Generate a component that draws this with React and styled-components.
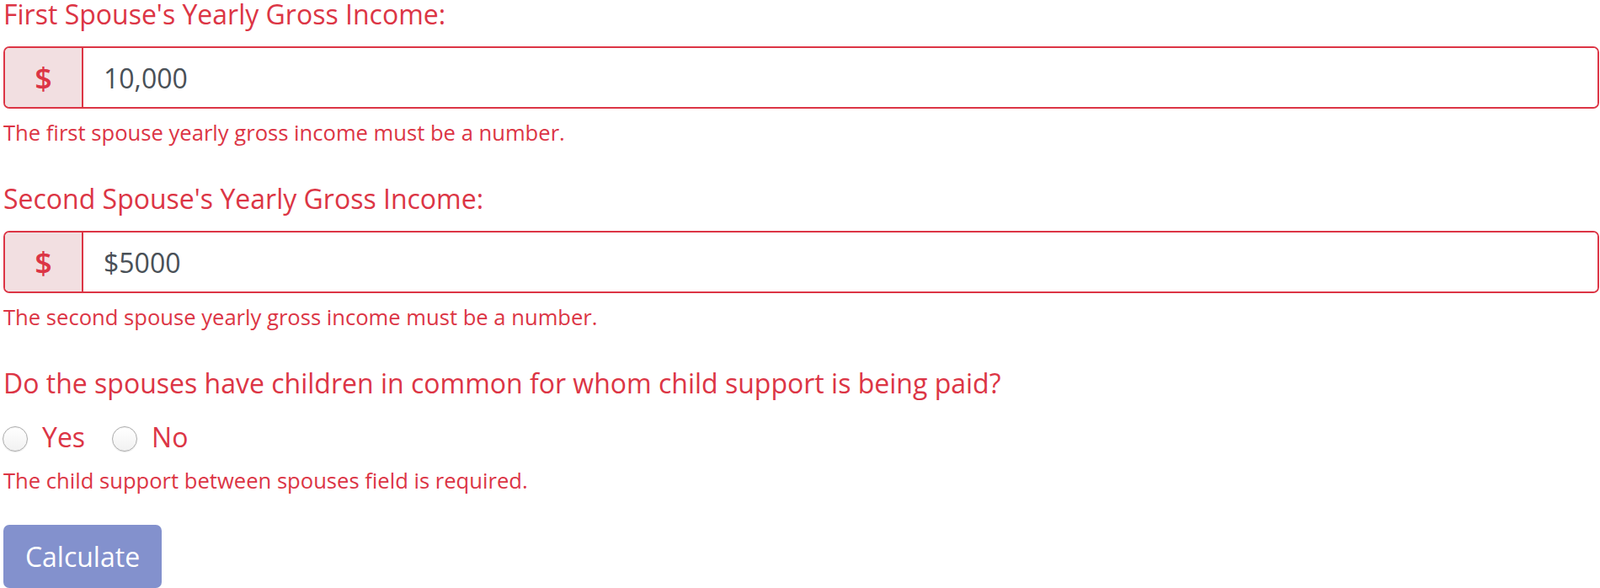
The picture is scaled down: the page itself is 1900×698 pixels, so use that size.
import React from 'react';
import styled, { createGlobalStyle } from 'styled-components';

const danger = '#dc3545';

const GlobalStyle = createGlobalStyle`
  body {
    margin: 0;
    background: #fff;
    font-family: "Open Sans", "Liberation Sans", sans-serif;
  }
`

// formular mit den einzelnen feldern
const Form = styled.form`
  padding-left: 4px;
  width: 1895px;
`

const Group = styled.div`
  margin-bottom: 42px;
`

const Label = styled.label`
  display: block;
  padding-top: 3px;
  font-size: 32px;
  line-height: 28px;
  color: ${danger};
  margin-bottom: ${props => props.gap ?? 24}px;
`

const InputGroup = styled.div`
  display: flex;
  height: 74px;
  border: 2px solid ${danger};
  border-radius: 7px;
  overflow: hidden;
  box-sizing: border-box;
`

const Addon = styled.span`
  display: flex;
  align-items: center;
  justify-content: center;
  width: 91px;
  flex-shrink: 0;
  background: #f2dfe1;
  border-right: 2px solid ${danger};
  color: ${danger};
  font-size: 36px;
  font-weight: 600;
`

const Field = styled.input`
  flex: 1;
  border: 0;
  outline: none;
  padding: 0 0 0 24px;
  font-family: inherit;
  font-size: 32px;
  color: #495057;
  background: #fff;
`

const Error = styled.div`
  margin-top: ${props => props.gap ?? 10}px;
  font-size: 25.6px;
  line-height: 38px;
  color: ${danger};
`

const RadioRow = styled.div`
  display: flex;
  align-items: center;
  gap: 33px;
  height: 48px;
  margin-top: 26px;
`

const RadioLabel = styled.label`
  display: flex;
  align-items: center;
  gap: 17px;
  font-size: 32px;
  line-height: 48px;
  color: ${danger};
`

const Radio = styled.input`
  appearance: none;
  margin: 4px 0 0 -1px;
  width: 30px;
  height: 30px;
  border-radius: 50%;
  border: 1px solid #adadad;
  background: linear-gradient(#ffffff, #f1f1f1);
  box-shadow: inset 0 1px 1px rgba(0, 0, 0, 0.06), 0 1px 1px rgba(0, 0, 0, 0.1);
  box-sizing: border-box;
`

const Button = styled.button`
  display: block;
  margin-top: 33px;
  width: 188px;
  height: 75px;
  border: 0;
  border-radius: 7px;
  background: #8391cd;
  color: #fff;
  font-family: inherit;
  font-size: 32px;
  padding: 0;
`

function MoneyField({ label, value, error }) {
  return (
    <Group>
      <Label>{label}</Label>
      <InputGroup>
        <Addon>$</Addon>
        <Field defaultValue={value} />
      </InputGroup>
      <Error>{error}</Error>
    </Group>
  );
}

export default function App() {
  return (
    <>
      <GlobalStyle />
      <Form onSubmit={e => e.preventDefault()}>
        <MoneyField
          label="First Spouse's Yearly Gross Income:"
          value="10,000"
          error="The first spouse yearly gross income must be a number."
        />
        <MoneyField
          label="Second Spouse's Yearly Gross Income:"
          value="$5000"
          error="The second spouse yearly gross income must be a number."
        />
        <div>
          <Label gap={0}>Do the spouses have children in common for whom child support is being paid?</Label>
          <RadioRow>
            <RadioLabel><Radio type="radio" name="children" />Yes</RadioLabel>
            <RadioLabel><Radio type="radio" name="children" />No</RadioLabel>
          </RadioRow>
          <Error gap={9}>The child support between spouses field is required.</Error>
        </div>
        <Button type="submit" disabled>Calculate</Button>
      </Form>
    </>
  );
}
